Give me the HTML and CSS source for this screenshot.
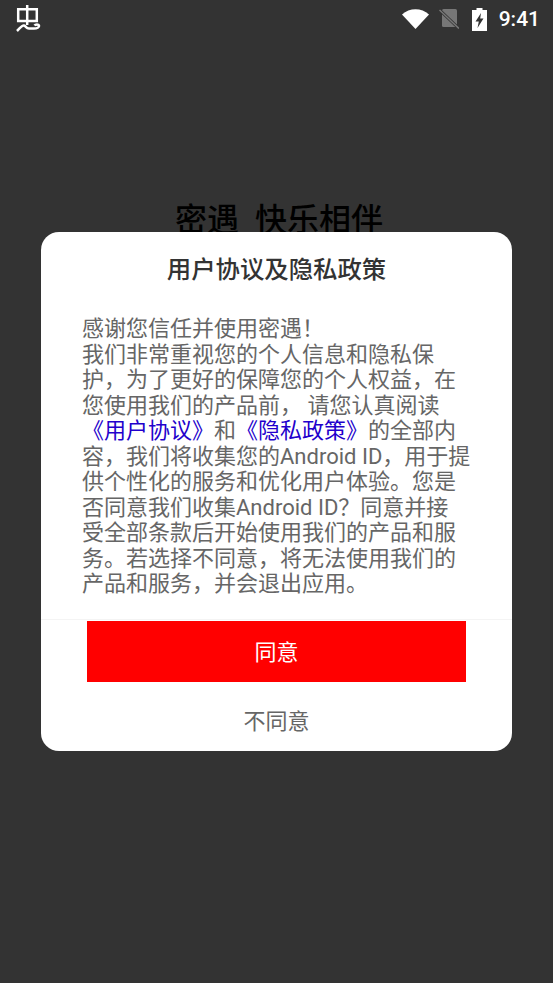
FILE: index.html
```html
<!DOCTYPE html>
<html lang="zh-CN">
<head>
<meta charset="utf-8">
<title>密遇</title>
<link rel="stylesheet" href="styles.css">
</head>
<body>
<div class="screen">
  <header class="status">
    <svg class="app-icon" viewBox="0 0 26 28" width="26" height="28" aria-hidden="true">
      <path d="M3.200 4.200H21.800V16H3.200Z M12.200 0V20 M2 26C5 23 7 20 9 20.500C11 21 11 23.500 14 23.500H19C22 23.500 24.500 22.500 24 20.500C23.500 19 20.500 19 19.500 20.500" fill="none" stroke="#fff" stroke-width="2.500"/>
    </svg>
    <div class="status-right">
      <svg class="wifi" viewBox="0 0 27 20" width="27" height="20" aria-hidden="true"><path d="M0 5.500C7.500 -1.500 19.500 -1.500 27 5.500L13.500 20Z" fill="#fff"/></svg>
      <svg class="sim" viewBox="0 0 20 20" width="20" height="20" aria-hidden="true"><path d="M4.500 0H16.500Q18 0 18 1.500V16.500Q18 18 16.500 18H4.500Q3 18 3 16.500V1.500Q3 0 4.500 0Z" fill="#777"/><path d="M0.500 1L20 19.500" stroke="#333" stroke-width="3"/><path d="M0.500 1L20 19.500" stroke="#777" stroke-width="1.500"/></svg>
      <svg class="battery" viewBox="0 0 15 23" width="15" height="23" aria-hidden="true"><path d="M4.500 0H10.500V2H15V23H0V2H4.500Z" fill="#fff"/><path d="M9 5L3.500 13.500H6.800L5.500 20L11.500 10.500H8.200Z" fill="#333"/></svg>
      <span class="clock">9:41</span>
    </div>
  </header>
  <h1 class="slogan">密遇 快乐相伴</h1>
  <section class="dialog">
    <h2 class="dialog-title">用户协议及隐私政策</h2>
    <p class="dialog-body">感谢您信任并使用密遇！<br>我们非常重视您的个人信息和隐私保<br>护，为了更好的保障您的个人权益，在<br>您使用我们的产品前， 请您认真阅读<br><a class="link">《用户协议》</a>和<a class="link">《隐私政策》</a>的全部内<br>容，我们将收集您的Android ID，用于提<br>供个性化的服务和优化用户体验。您是<br>否同意我们收集Android ID？同意并接<br>受全部条款后开始使用我们的产品和服<br>务。若选择不同意，将无法使用我们的<br>产品和服务，并会退出应用。</p>
    <div class="actions">
      <button class="agree">同意</button>
      <button class="disagree">不同意</button>
    </div>
  </section>
</div>
</body>
</html>
```
FILE: styles.css
```css
* { box-sizing: border-box; margin: 0; padding: 0; }
html, body { width: 553px; height: 983px; overflow: hidden; background: #333; }
body { font-family: "Noto Sans CJK SC", "Noto Sans", sans-serif; }
.screen { position: relative; width: 553px; height: 983px; background: #333; }
.status { height: 40px; display: flex; align-items: center; justify-content: space-between; padding: 0 13px 2px 15px; }
.status-right { display: flex; align-items: center; }
.wifi { margin-right: 10px; }
.sim { margin-right: 13px; }
.battery { margin-right: 12px; }
.clock { font-family: Roboto, sans-serif; font-size: 21px; font-weight: 500; color: #fff; }
.slogan { margin-top: 155px; padding-left: 5px; text-align: center; font-size: 32px; line-height: 44px; font-weight: 500; word-spacing: 9px; color: #000; }
.dialog { position: absolute; left: 41px; top: 232px; width: 471px; height: 519px; background: #fff; border-radius: 18px; display: flex; flex-direction: column; }
.dialog-title { margin-top: 19px; text-align: center; font-size: 24.4px; line-height: 34px; font-weight: 500; color: #333; }
.dialog-body { margin: 31px 0 0 41px; font-family: Roboto, "Noto Sans CJK SC", sans-serif; font-size: 22px; line-height: 25.5px; color: #666; white-space: nowrap; }
.link { color: #2200cc; }
.actions { margin-top: 22.5px; border-top: 1px solid #f4f4f4; display: flex; flex-direction: column; align-items: center; }
.agree { width: 379px; height: 61px; margin-top: 0.5px; padding-bottom: 2px; border: 0; background: #f00; color: #fff; font: inherit; font-size: 22px; }
.disagree { width: 379px; height: 65px; padding-top: 9px; border: 0; background: none; color: #666; font: inherit; font-size: 22px; }
```
